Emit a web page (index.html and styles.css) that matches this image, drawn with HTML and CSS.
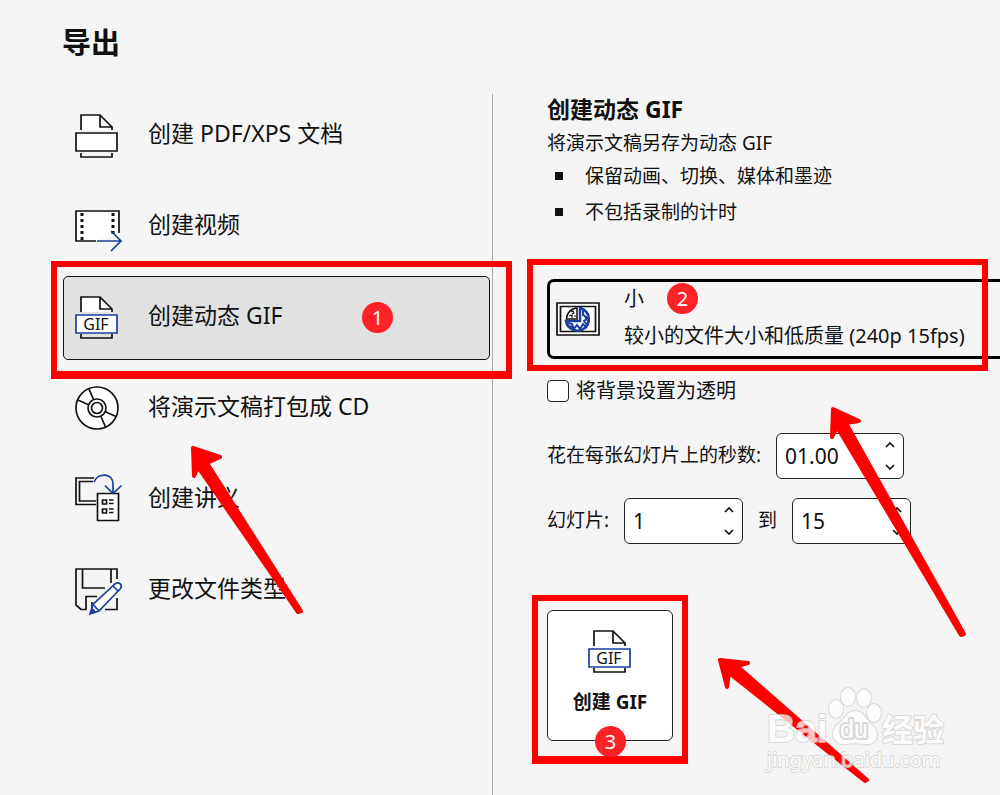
FILE: index.html
```html
<!DOCTYPE html>
<html lang="zh-CN">
  <head>
    <meta charset="UTF-8" />
    <meta name="viewport" content="width=device-width, initial-scale=1.0" />
    <title>导出</title>
    <link rel="stylesheet" href="styles.css">
  </head>
  <body>
    <div class="page">
      <header class="header">
        <h1 class="header-title">导出</h1>
      </header>
      <div class="content">
        <nav class="sidebar">
          <button type="button" class="menu-item">
            <svg class="menu-icon" viewBox="0 0 48 48">
              <path class="ink paper" d="M6 18V3h19l12 12v3M25 3v12h12" />
              <path class="ink paper" d="M1 21h41v18H1z" />
              <path class="ink" d="M6 41v4h31v-4" />
            </svg>
            <span class="menu-text">创建 PDF/XPS 文档</span>
          </button>
          <button type="button" class="menu-item">
            <svg class="menu-icon" viewBox="0 0 48 48">
              <path class="ink paper" d="M21 38H1V8h43v22" />
              <path class="dots" d="M7 10v28M38 10v22" />
              <path class="blue" d="M22 38h25M36 28l10 10-10 10" />
            </svg>
            <span class="menu-text">创建视频</span>
          </button>
          <button type="button" class="menu-item menu-item--active">
            <svg class="menu-icon" viewBox="0 0 48 48">
              <path class="paper" d="M6 18V3h19l12 12v3z" />
              <path class="ink" d="M6 18V3h19l12 12v3M25 3v12h12M6 40v4h31v-4" />
              <path class="blue paper" d="M1 21h41v18H1z" />
              <text x="21" y="36" text-anchor="middle" class="icon-label">GIF</text>
            </svg>
            <span class="menu-text">创建动态 GIF</span>
            <span class="mark mark--menu"></span>
            <span class="badge badge--menu">1</span>
          </button>
          <button type="button" class="menu-item">
            <svg class="menu-icon" viewBox="0 0 48 48">
              <circle class="ink paper" cx="22" cy="23" r="21" />
              <circle class="ink" cx="22" cy="23" r="9" />
              <circle class="ink" cx="22" cy="23" r="5.5" />
              <path class="ink" d="M14 4l4.500 10.500M3 15l11 5M30 26.500l11 5M26 31.500l4.500 10.500" />
            </svg>
            <span class="menu-text">将演示文稿打包成 CD</span>
          </button>
          <button type="button" class="menu-item">
            <svg class="menu-icon" viewBox="0 0 48 48">
              <path class="ink" d="M19 2H1v26.500h20M18 5.500H4.500V25H21" />
              <path class="ink paper" d="M22.500 17.500h21v27h-21z" />
              <path class="ink" d="M27.500 24h4v4h-4zM27.500 33h4v4h-4zM34 24h4.500M34 27.500h4.500M34 33h4.500M34 36.500h4.500" />
              <path class="blue" d="M19 6C23-4 38-3 38 8v9M30 9.500l8 8 8.500-8" />
            </svg>
            <span class="menu-text">创建讲义</span>
          </button>
          <button type="button" class="menu-item">
            <svg class="menu-icon" viewBox="0 0 48 48">
              <path class="ink" d="M42 12V2H1v36l5 4.500h5V29.500h11M7.500 2v19H30M36 2v14M42 31v11.500H30M17 35v7" />
              <path class="blue paper" d="M15 47l3-9.500L40 17c4-3 8 1 5.500 4.500L24 44z" />
              <path class="blue" d="M18 37.500l6 6.500M38 19l5.500 5.500" />
              <path d="M15 47l2.500-6 3.500 3.500z" fill="#1a3f9c" />
            </svg>
            <span class="menu-text">更改文件类型</span>
          </button>
        </nav>

        <main class="panel">
          <h2 class="panel-title">创建动态 GIF</h2>
          <p class="panel-desc">将演示文稿另存为动态 GIF</p>
          <ul class="panel-list">
            <li>保留动画、切换、媒体和墨迹</li>
            <li>不包括录制的计时</li>
          </ul>

          <button type="button" class="preset" aria-haspopup="listbox">
            <svg class="preset-icon" viewBox="0 0 44 34">
              <path class="ink paper" d="M1 1h42v32H1zM4.500 4.500h35v25h-35z" />
              <path d="M24 6A11.500 11.500 0 1 1 10 19h14z" fill="#fff" stroke="#1a3f9c" stroke-width="2.500" />
              <path d="M27 7v6l5 3-4 3 4 5M27 12l6 8M30 10l3 3M12 21l4 1 2 5 3-4 3 4 3-5 4 4M14 24l5 3" fill="none" stroke="#1a3f9c" stroke-width="2" />
              <path d="M21 17H10.500A11 11 0 0 1 21 6z" fill="#fff" stroke="#111" stroke-width="1.500" />
              <path d="M13 14l3-1v3M15 10l2-1 1 2-2 1M18 14h2" fill="none" stroke="#111" stroke-width="1.200" />
            </svg>
            <span class="preset-text">
              <span>小</span>
              <span>较小的文件大小和低质量 (240p 15fps)</span>
            </span>
            <span class="mark mark--preset"></span>
            <span class="badge badge--preset">2</span>
          </button>

          <label class="check">
            <input type="checkbox" class="check-box" />
            <span class="check-text">将背景设置为透明</span>
          </label>

          <div class="field">
            <label for="seconds">花在每张幻灯片上的秒数:</label>
            <div class="spinner spinner--wide">
              <input id="seconds" type="text" inputmode="decimal" value="01.00" />
              <div class="spinner-buttons">
                <button type="button" aria-label="增加"><svg viewBox="0 0 10 6"><path class="ink" d="M1 5l4-4 4 4" /></svg></button>
                <button type="button" aria-label="减少"><svg viewBox="0 0 10 6"><path class="ink" d="M1 1l4 4 4-4" /></svg></button>
              </div>
            </div>
          </div>

          <div class="field">
            <label for="slide-from">幻灯片:</label>
            <div class="spinner">
              <input id="slide-from" type="text" inputmode="numeric" value="1" />
              <div class="spinner-buttons">
                <button type="button" aria-label="增加"><svg viewBox="0 0 10 6"><path class="ink" d="M1 5l4-4 4 4" /></svg></button>
                <button type="button" aria-label="减少"><svg viewBox="0 0 10 6"><path class="ink" d="M1 1l4 4 4-4" /></svg></button>
              </div>
            </div>
            <label for="slide-to">到</label>
            <div class="spinner">
              <input id="slide-to" type="text" inputmode="numeric" value="15" />
              <div class="spinner-buttons">
                <button type="button" aria-label="增加"><svg viewBox="0 0 10 6"><path class="ink" d="M1 5l4-4 4 4" /></svg></button>
                <button type="button" aria-label="减少"><svg viewBox="0 0 10 6"><path class="ink" d="M1 1l4 4 4-4" /></svg></button>
              </div>
            </div>
          </div>

          <button type="button" class="create">
            <svg class="menu-icon" viewBox="0 0 48 48">
              <path class="ink" d="M6 18V3h19l12 12v3M25 3v12h12M6 40v4h31v-4" />
              <path class="blue paper" d="M1 21h41v18H1z" />
              <text x="21" y="36" text-anchor="middle" class="icon-label">GIF</text>
            </svg>
            <span>创建 GIF</span>
            <span class="mark mark--create"></span>
            <span class="badge badge--create">3</span>
          </button>
        </main>
      </div>

      <!-- arrows and watermark drawn over the page -->
      <svg class="overlay" width="1000" height="795" viewBox="0 0 1000 795" aria-hidden="true">
        <g class="arrow">
          <path d="M193 448l27 9-13 6 94 148-3 1-100-145-4 9z" />
          <path d="M833 409l26 12-13 2 118 211-3 1-124-208-5 10z" />
          <path d="M720 660l28 3-11 3 130 114-2 1-136-108-2 14z" />
        </g>
        <g class="watermark">
          <text x="767" y="742" class="watermark-logo">Bai</text>
          <ellipse cx="836" cy="709" rx="7" ry="9" />
          <ellipse cx="848" cy="697" rx="7" ry="9" />
          <ellipse cx="864" cy="698" rx="7" ry="9" />
          <ellipse cx="874" cy="713" rx="7" ry="9" />
          <path d="M855 711c-7 0-9 6-13 10-5 4-9 7-9 13 0 7 6 11 12 10 7-1 13-1 20 0 7 1 12-3 12-10 0-6-5-9-9-13-4-5-6-10-13-10z" />
          <text x="840" y="738" class="watermark-du">du</text>
          <text x="882" y="741" class="watermark-cn">经验</text>
          <text x="767" y="767" class="watermark-url">jingyan.baidu.com</text>
        </g>
      </svg>
    </div>
  </body>
</html>
```
FILE: styles.css
```css
:root {
  --color-bg: #f5f5f5;
  --color-text: #111;
  --color-blue: #1a3f9c;
  --color-red: #f00;
}
* {
  box-sizing: border-box;
}
body {
  margin: 0;
  background: var(--color-bg);
  color: var(--color-text);
  font-family: "Noto Sans", "Noto Sans CJK SC", sans-serif;
  font-size: 19px;
}
button,
input {
  font: inherit;
  color: inherit;
}
button {
  padding: 0;
  border: 0;
  background: none;
  text-align: left;
}

.page {
  position: relative;
  display: flex;
  flex-direction: column;
  min-height: 100vh;
  overflow: hidden;
}
.header {
  padding: 21px 62px 29px;
}
.header-title {
  margin: 0;
  font-size: 29px;
  line-height: 44px;
}
.content {
  flex: 1;
  display: flex;
}

/* icons */
.ink,
.blue {
  fill: none;
  stroke: #111;
  stroke-width: 1.7;
}
.blue {
  stroke: var(--color-blue);
}
.paper {
  fill: #fff;
}
.dots {
  fill: none;
  stroke: #111;
  stroke-width: 3;
  stroke-dasharray: 3 3;
}
.icon-label {
  font-size: 16px;
  font-weight: normal;
  fill: #111;
}

/* left menu */
.sidebar {
  flex: none;
  display: flex;
  flex-direction: column;
  gap: 7px;
  width: 493px;
  padding: 0 2px 0 63px;
  border-right: 1px solid #aaa;
}
.menu-item {
  position: relative;
  display: flex;
  align-items: center;
  gap: 25px;
  height: 84px;
  padding: 0 11px;
  border: 1px solid transparent;
  border-radius: 5px;
  font-size: 23px;
}
.menu-item--active {
  border-color: #111;
  background: #e1e1e1;
}
.menu-icon {
  flex: none;
  width: 48px;
  height: 48px;
  overflow: visible;
}
.menu-text {
  padding-bottom: 8px;
}

/* right panel */
.panel {
  flex: 1;
  min-width: 0;
  padding: 0 0 48px 54px;
}
.panel-title {
  margin: 0 0 4px;
  font-size: 23px;
  line-height: 30px;
}
.panel-desc {
  margin: 0;
  line-height: 30px;
}
.panel-list {
  margin: 0 0 49px;
  padding: 0;
  list-style: none;
  line-height: 36px;
}
.panel-list li {
  display: flex;
  align-items: center;
  gap: 22px;
  padding-left: 8px;
}
.panel-list li::before {
  content: "";
  width: 8px;
  height: 8px;
  background: #111;
}

.preset {
  position: relative;
  display: flex;
  align-items: center;
  gap: 24px;
  width: 100%;
  height: 80px;
  padding-left: 6px;
  border: 3px solid #000;
  border-right: 0;
  border-radius: 7px 0 0 7px;
  font-size: 20px;
  white-space: nowrap;
}
.preset-icon {
  flex: none;
  width: 44px;
  height: 34px;
}
.preset-text {
  display: flex;
  flex-direction: column;
  padding-bottom: 4px;
  line-height: 37px;
}

.check {
  display: flex;
  align-items: center;
  gap: 7px;
  height: 32px;
  margin: 16px 0 26px;
  font-size: 20px;
}
.check-box {
  appearance: none;
  width: 22px;
  height: 22px;
  margin: 0;
  border: 1px solid #222;
  border-radius: 4px;
  background: #fff;
}
.check-text {
  padding-bottom: 4px;
}

.field {
  display: flex;
  align-items: center;
  gap: 15px;
  margin-bottom: 19px;
}
.field label {
  padding-bottom: 4px;
}
.spinner {
  display: flex;
  width: 119px;
  height: 46px;
  border: 1px solid #222;
  border-radius: 6px;
  background: #fff;
}
.spinner--wide {
  width: 128px;
}
.spinner input {
  flex: 1;
  min-width: 0;
  padding: 0 0 0 8px;
  border: 0;
  background: none;
  font-size: 21px;
}
.spinner-buttons {
  display: flex;
  flex-direction: column;
  justify-content: space-between;
  width: 26px;
  padding: 8px;
}
.spinner-buttons button {
  display: flex;
  width: 10px;
  height: 6px;
}

.create {
  position: relative;
  display: flex;
  flex-direction: column;
  align-items: center;
  justify-content: center;
  gap: 14px;
  width: 126px;
  height: 131px;
  margin-top: 66px;
  padding-bottom: 9px;
  border: 1px solid #222;
  border-radius: 6px;
  background: #fff;
  font-weight: bold;
  line-height: 24px;
}
.create .menu-icon {
  margin-left: 4px;
}

/* red callouts */
.mark {
  position: absolute;
  border: 6px solid var(--color-red);
}
.mark--menu {
  inset: -16px -23px -20px -13px;
  border-bottom-width: 8px;
}
.mark--preset {
  top: -23px;
  left: -23px;
  width: 461px;
  height: 112px;
}
.mark--create {
  inset: -16px -16px -24px -16px;
  border-bottom-width: 8px;
}
.badge {
  position: absolute;
  width: 31px;
  height: 31px;
  border-radius: 50%;
  background: #fc2226;
  color: #fff;
  font-size: 20px;
  font-weight: normal;
  line-height: 31px;
  text-align: center;
}
.badge--menu {
  top: 25px;
  left: 298px;
}
.badge--preset {
  top: 1px;
  left: 117px;
}
.badge--create {
  bottom: -17px;
  left: 47px;
}

.overlay {
  position: absolute;
  top: 0;
  left: 0;
  pointer-events: none;
}
.arrow {
  fill: var(--color-red);
  stroke: var(--color-red);
  stroke-width: 4;
  stroke-linejoin: round;
}
.watermark {
  fill: #fff;
  stroke: #d0d0d0;
  stroke-width: 2;
  stroke-linejoin: round;
  paint-order: stroke;
  opacity: 0.75;
}
.watermark-logo {
  font: bold 39px "Liberation Sans", sans-serif;
}
.watermark-du {
  font: 25px "Liberation Sans", sans-serif;
  stroke-width: 4;
}
.watermark-cn {
  font-size: 31px;
  font-weight: bold;
}
.watermark-url {
  font-size: 20px;
}
```
